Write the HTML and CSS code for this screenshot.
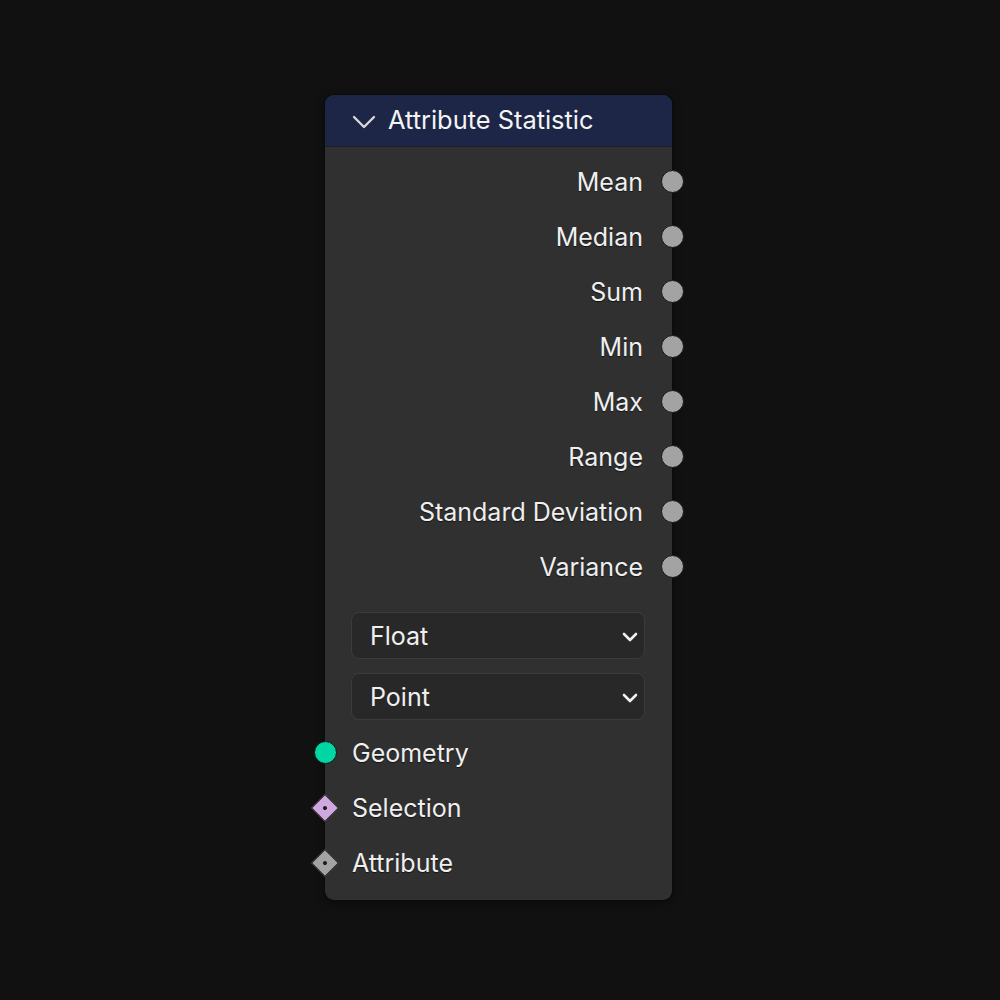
FILE: index.html
```html
<!DOCTYPE html>
<html>
<head>
<meta charset="utf-8">
<link rel="stylesheet" href="styles.css">
</head>
<body>
<div class="stage">
  <div class="node">
    <div class="header">
      <svg class="collapse" width="24" height="14" viewBox="0 0 24 14"><path d="M2 2 L12 12 L22 2" fill="none" stroke="#d8d8d8" stroke-width="2.4" stroke-linecap="round" stroke-linejoin="round"/></svg>
      <span class="title">Attribute Statistic</span>
    </div>
    <div class="body">
      <div class="row out"><span>Mean</span><i class="sock circle grey"></i></div>
      <div class="row out"><span>Median</span><i class="sock circle grey"></i></div>
      <div class="row out"><span>Sum</span><i class="sock circle grey"></i></div>
      <div class="row out"><span>Min</span><i class="sock circle grey"></i></div>
      <div class="row out"><span>Max</span><i class="sock circle grey"></i></div>
      <div class="row out"><span>Range</span><i class="sock circle grey"></i></div>
      <div class="row out"><span>Standard Deviation</span><i class="sock circle grey"></i></div>
      <div class="row out"><span>Variance</span><i class="sock circle grey"></i></div>
      <div class="dropdowns">
        <div class="select"><span>Float</span><svg width="16" height="10" viewBox="0 0 16 10"><path d="M2 2 L8 8 L14 2" fill="none" stroke="#f0f0f0" stroke-width="2.6" stroke-linecap="round" stroke-linejoin="round"/></svg></div>
        <div class="select"><span>Point</span><svg width="16" height="10" viewBox="0 0 16 10"><path d="M2 2 L8 8 L14 2" fill="none" stroke="#f0f0f0" stroke-width="2.6" stroke-linecap="round" stroke-linejoin="round"/></svg></div>
      </div>
      <div class="row in"><i class="sock circle geo"></i><span>Geometry</span></div>
      <div class="row in"><i class="sock diamond sel"><b></b></i><span>Selection</span></div>
      <div class="row in"><i class="sock diamond attr"><b></b></i><span>Attribute</span></div>
    </div>
  </div>
</div>
</body>
</html>
```

FILE: styles.css
```css
html, body {
  margin: 0;
  padding: 0;
  background: #111111;
}
body {
  width: 1000px;
  height: 1000px;
  font-family: Inter, "Noto Sans", sans-serif;
  color: #efefef;
}
.stage {
  padding-top: 95px;
  padding-left: 325px;
}
.node {
  width: 347px;
  height: 805px;
  background: #303030;
  border-radius: 9px;
  box-shadow: 0 0 0 1px #0c0c0c, 0 2px 8px rgba(0,0,0,0.5);
  position: relative;
  box-sizing: border-box;
}
.header {
  height: 51px;
  background: #1d2647;
  border-radius: 9px 9px 0 0;
  display: flex;
  align-items: center;
  padding-left: 27px;
  gap: 12px;
  border-bottom: 1px solid #1a1f30;
}
.collapse {
  display: block;
  margin-top: 2px;
}
.title {
  font-size: 25.4px;
  color: #f4f4f4;
  margin-top: -2px;
}
.body {
  padding-top: 7px;
  display: flex;
  flex-direction: column;
}
.row {
  height: 55px;
  display: flex;
  align-items: center;
  font-size: 25px;
  position: relative;
  text-shadow: 0 1px 1px rgba(0,0,0,0.6);
}
.row.out {
  justify-content: flex-end;
  padding-right: 29px;
}
.row.in {
  padding-left: 27px;
}
.sock {
  position: absolute;
  top: 50%;
  box-sizing: border-box;
}
.circle {
  width: 23px;
  height: 23px;
  border-radius: 50%;
  margin-top: -11.5px;
  border: 1.5px solid #141414;
}
.out .sock {
  right: -11.5px;
}
.in .circle {
  left: -11.5px;
}
.grey {
  background: #a3a3a3;
}
.geo {
  background: #00d6a3;
}
.diamond {
  width: 20px;
  height: 20px;
  margin-top: -10px;
  left: -10px;
  transform: rotate(45deg);
  border: 1.5px solid #161616;
  display: flex;
  align-items: center;
  justify-content: center;
}
.diamond b {
  width: 4px;
  height: 4px;
  border-radius: 50%;
  background: #1a1a1a;
}
.sel {
  background: #cfa8e0;
}
.attr {
  background: #a3a3a3;
}
.dropdowns {
  display: flex;
  flex-direction: column;
  gap: 14px;
  padding: 18px 27px 5px 26px;
}
.select {
  height: 47px;
  box-sizing: border-box;
  background: #282828;
  border: 1px solid #3c3c3c;
  border-radius: 8px;
  display: flex;
  align-items: center;
  justify-content: space-between;
  padding: 0 6px 0 18px;
  font-size: 25px;
  color: #f0f0f0;
}
.select svg {
  display: block;
  margin-top: 2px;
}
```
